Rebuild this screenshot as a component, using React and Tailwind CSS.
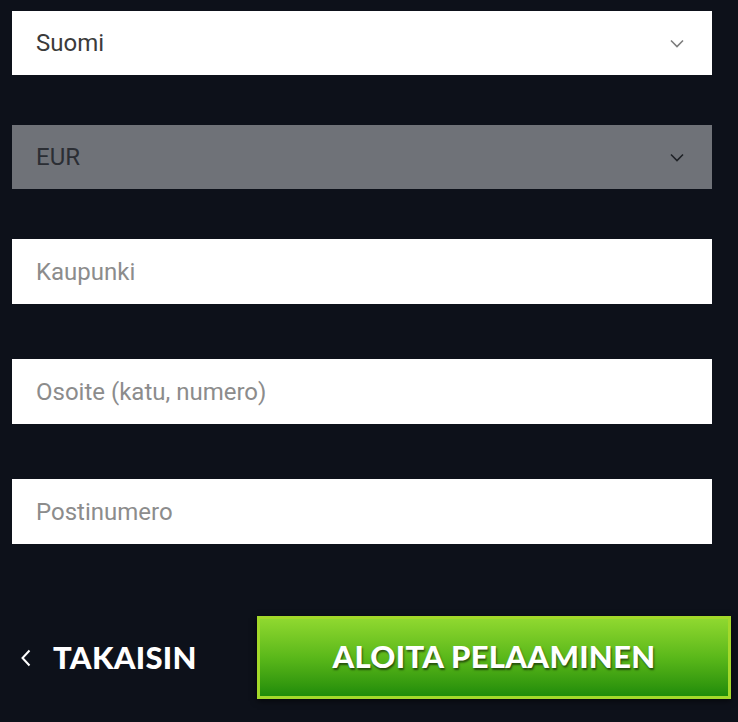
import React from "react";

function Chevron({ className }) {
  return (
    <svg width="14" height="9" viewBox="0 0 14 9" fill="none" className={className}>
      <path d="M1 1.5 L7 7.5 L13 1.5" stroke="currentColor" strokeWidth="1.6" />
    </svg>
  );
}

function SelectBox({ value, disabled, className = "" }) {
  return (
    <div
      className={`flex h-[64px] w-[700px] items-center justify-between pl-[24px] pr-[28px] ${
        disabled ? "bg-[#6f7278] text-[#2b2e34]" : "bg-white text-[#3b3b3b]"
      } ${className}`}
    >
      <span className="text-[24px] leading-none">{value}</span>
      <Chevron className={disabled ? "text-[#1f2227]" : "text-[#7d7d7d]"} />
    </div>
  );
}

function TextBox({ placeholder, className = "" }) {
  return (
    <input
      placeholder={placeholder}
      className={`block h-[65px] w-[700px] bg-white pl-[24px] text-[24px] text-[#333] outline-none placeholder:text-[#8c8c8c] ${className}`}
    />
  );
}

export default function App() {
  return (
    <div
      className="relative h-[722px] w-[738px] overflow-hidden bg-[#0d111a] pl-[12px] pt-[11px]"
      style={{ fontFamily: "Roboto, 'Liberation Sans', sans-serif" }}
    >
      <div className="flex flex-col">
        <SelectBox value="Suomi" />
        <SelectBox value="EUR" disabled className="mt-[50px]" />
        <TextBox placeholder="Kaupunki" className="mt-[50px] h-[64px]" />
        <TextBox placeholder="Osoite (katu, numero)" className="mt-[55px]" />
        <TextBox placeholder="Postinumero" className="mt-[55px]" />
      </div>

      <div className="mt-[72px] flex items-center">
        <button
          className="flex w-[245px] items-center gap-[21px] pl-[8px] text-white"
          style={{ fontFamily: "Lato, 'Liberation Sans', sans-serif" }}
        >
          <svg width="12" height="18" viewBox="0 0 12 18" fill="none">
            <path d="M9.5 1.5 L2.5 9 L9.5 16.5" stroke="white" strokeWidth="2" />
          </svg>
          <span className="text-[31px] font-black leading-none tracking-[0.3px]">TAKAISIN</span>
        </button>
        <button
          className="flex h-[83px] w-[474px] items-center justify-center border-[3px] border-[#a3d92a] bg-gradient-to-b from-[#8fd82f] via-[#5ab81a] to-[#1f8c0a] pb-[2px] text-[31px] font-black leading-none tracking-[0.3px] text-white shadow-[0_2px_6px_rgba(0,0,0,0.6)] [text-shadow:1px_2px_2px_rgba(0,0,0,0.55)]"
          style={{ fontFamily: "Lato, 'Liberation Sans', sans-serif" }}
        >
          ALOITA PELAAMINEN
        </button>
      </div>
    </div>
  );
}
